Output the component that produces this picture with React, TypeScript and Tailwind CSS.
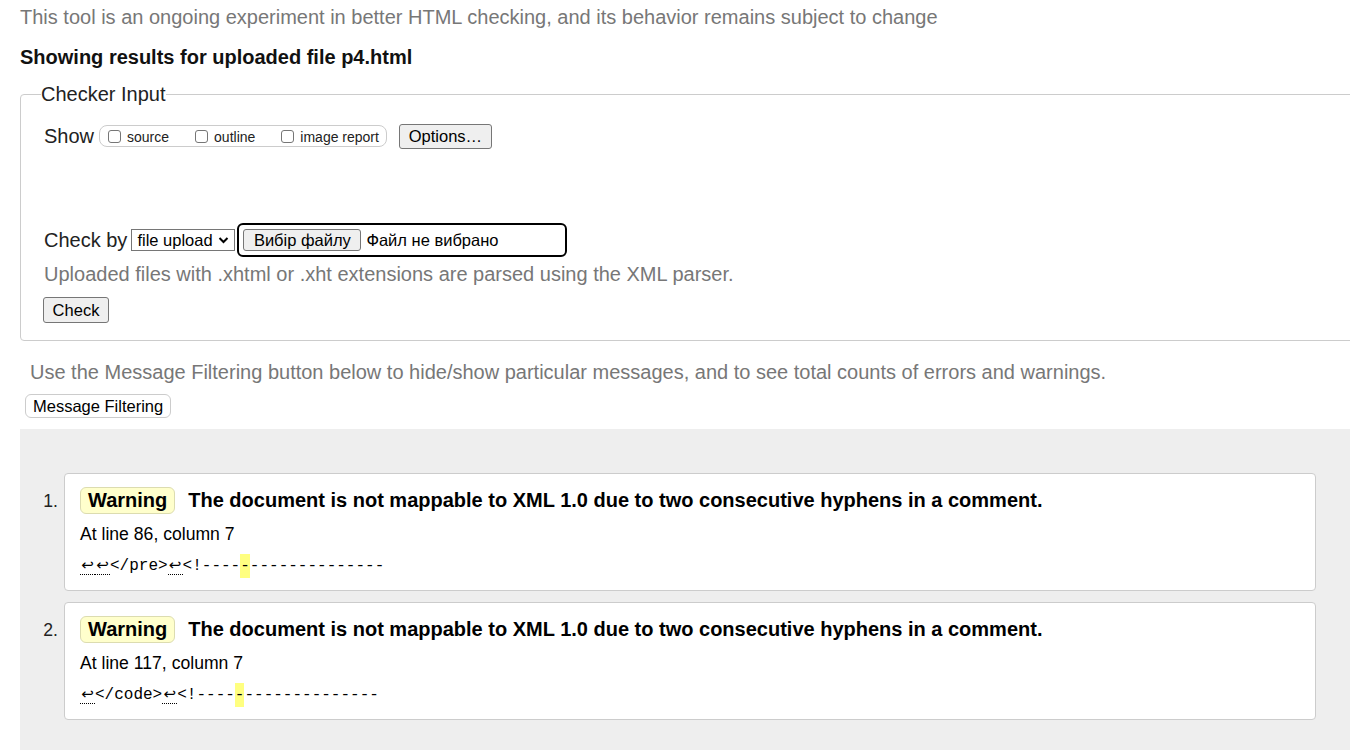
import React from "react";

const sans = { fontFamily: '"Liberation Sans", Arial, sans-serif' };
const mono = { fontFamily: '"Liberation Mono", "DejaVu Sans Mono", monospace' };

type Msg = {
  line: number;
  col: number;
  before: string[]; // "↩" parts are drawn as the dotted line-break marker
  tail: string;
};

const msgs: Msg[] = [
  { line: 86, col: 7, before: ["↩", "↩", "</pre>", "↩", "<!----"], tail: "--------------" },
  { line: 117, col: 7, before: ["↩", "</code>", "↩", "<!----"], tail: "--------------" },
];

function NativeButton({ children, className = "" }: { children: React.ReactNode; className?: string }) {
  return (
    <button
      className={`flex items-center justify-center rounded-[3px] border border-[#767676] bg-[#efefef] text-[16.5px] leading-none text-black ${className}`}
    >
      {children}
    </button>
  );
}

function Check({ label, className = "" }: { label: string; className?: string }) {
  return (
    <label className={`flex items-center ${className}`}>
      <span className="h-[13px] w-[13px] rounded-[3px] border border-[#767676] bg-white" />
      <span className="ml-[6px] mt-[3px]">{label}</span>
    </label>
  );
}

function Card({ m, n }: { m: Msg; n: number }) {
  return (
    <div className="flex">
      <div className="w-[44px] shrink-0 pr-[6px] pt-[17px] text-right text-[17.6px] leading-[22px] text-[#222]">{n}.</div>
      <div className="flex-1 rounded-[4px] border border-[#cccccc] bg-white pb-[13px] pl-[15px] pt-[13px]">
        <div className="flex h-[27px] items-center">
          <span className="rounded-[6px] border border-[#dcdcb0] bg-[#ffffcc] px-[7px] text-[20px] font-bold leading-[25px] text-black">
            Warning
          </span>
          <span className="ml-[13px] text-[20px] font-bold leading-[25px] text-black">
            The document is not mappable to XML 1.0 due to two consecutive hyphens in a comment.
          </span>
        </div>
        <div className="mt-[9px] text-[17.6px] leading-[22px] text-black">
          At line {m.line}, column {m.col}
        </div>
        <div className="mt-[10px] flex h-[22px] items-center text-[16px] text-black" style={mono}>
          {m.before.map((p, i) =>
            p === "↩" ? (
              <span
                key={i}
                className="inline-block w-[15px] border-b border-dotted border-black text-center leading-[17px]"
                style={{ fontFamily: '"DejaVu Sans", sans-serif', fontSize: 15 }}
              >
                ↩
              </span>
            ) : (
              <span key={i}>{p}</span>
            )
          )}
          <span className="bg-[#ffff80]">-</span>
          <span>{m.tail}</span>
        </div>
      </div>
    </div>
  );
}

export default function App() {
  return (
    <div className="h-screen w-[1350px] overflow-hidden bg-white" style={sans}>
      <div className="pl-5 pt-[6px]">
        <p className="text-[20px] leading-[23px] text-[#777777]">
          This tool is an ongoing experiment in better HTML checking, and its behavior remains subject to change
        </p>
        <h2 className="mt-[17px] text-[20px] font-bold leading-[23px] text-[#111]">
          Showing results for uploaded file p4.html
        </h2>

        <fieldset className="mt-[14px] w-[1360px] rounded-[4px] border border-[#cccccc] pb-[17px] pl-[20px]">
          <legend className="text-[20px] leading-[23px] text-[#222]">Checker Input</legend>

          <div className="ml-[3px] mt-[17px] flex h-[26px] items-center">
            <span className="text-[20px] text-[#222]">Show</span>
            <div className="ml-[5px] flex h-[22px] items-center rounded-[8px] border border-[#cccccc] pl-[8px] pr-[7px] text-[14px] text-[#222]">
              <Check label="source" />
              <Check label="outline" className="ml-[26px]" />
              <Check label="image report" className="ml-[26px]" />
            </div>
            <NativeButton className="ml-[12px] h-[25px] w-[93px]">Options…</NativeButton>
          </div>

          <div className="ml-[3px] mt-[74px] flex h-[34px] items-center">
            <span className="text-[20px] text-[#222]">Check by</span>
            <div className="ml-[4px] flex h-[22px] w-[104px] items-center border border-[#767676] bg-white pl-[5px] text-[16.5px] text-black">
              <span>file upload</span>
              <svg className="ml-[5px]" width="11" height="8" viewBox="0 0 11 8">
                <path d="M1.5 2 L5.5 6 L9.5 2" stroke="black" strokeWidth="2" fill="none" />
              </svg>
            </div>
            <div className="ml-[2px] flex h-[34px] w-[330px] items-center rounded-[6px] border-2 border-black pl-[4px]">
              <NativeButton className="h-[22px] w-[118px]">Вибір файлу</NativeButton>
              <span className="ml-[5px] text-[16.5px] text-black">Файл не вибрано</span>
            </div>
          </div>

          <p className="ml-[3px] mt-[6px] text-[20px] leading-[23px] text-[#777777]">
            Uploaded files with .xhtml or .xht extensions are parsed using the XML parser.
          </p>
          <NativeButton className="ml-[2px] mt-[11px] h-[26px] w-[66px]">Check</NativeButton>
        </fieldset>

        <p className="ml-[10px] mt-[20px] text-[20px] leading-[23px] text-[#777777]">
          Use the Message Filtering button below to hide/show particular messages, and to see total counts of errors and warnings.
        </p>
        <button className="ml-[5px] mt-[10px] flex h-[24px] items-center rounded-[6px] border border-[#cccccc] bg-white px-[7px] text-[16.5px] text-black">
          Message Filtering
        </button>

        <div className="mt-[11px] flex h-[400px] w-[1340px] flex-col gap-[11px] bg-[#eeeeee] pr-[44px] pt-[44px]">
          {msgs.map((m, i) => (
            <Card key={i} m={m} n={i + 1} />
          ))}
        </div>
      </div>
    </div>
  );
}
